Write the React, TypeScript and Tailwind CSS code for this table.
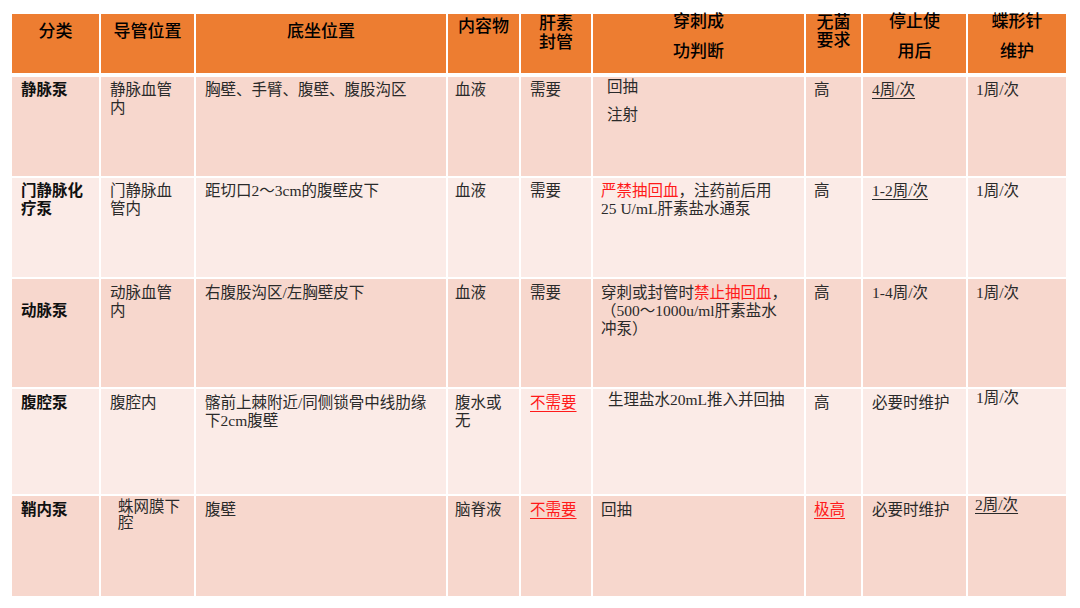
import React from 'react'

const cols = 'grid grid-cols-[87px_93px_250px_71px_70px_211px_55px_103px_98px] gap-x-[2px]'

const Red = ({ children, u }: { children: React.ReactNode; u?: boolean }) => (
  <span className={`text-[#ff1a1a] ${u ? 'underline underline-offset-[3px] decoration-1' : ''}`}>{children}</span>
)

const U = ({ children }: { children: React.ReactNode }) => (
  <span className="underline underline-offset-[3px] decoration-1">{children}</span>
)

interface Row {
  bg: string
  h: string
  cells: React.ReactNode[]
}

const rows: Row[] = [
  {
    bg: 'bg-[#f7d7cd]',
    h: 'h-[99px]',
    cells: [
      <div className="pl-[9px] pt-[4px] font-bold text-[#111]">静脉泵</div>,
      <div className="pl-[9px] pt-[4px]">静脉血管<br />内</div>,
      <div className="pl-[9px] pt-[4px]">胸壁、手臂、腹壁、腹股沟区</div>,
      <div className="pl-[7px] pt-[4px]">血液</div>,
      <div className="pl-[9px] pt-[4px]">需要</div>,
      <div className="pl-[14px] pt-[1px] flex flex-col gap-[10px]">
        <span>回抽</span>
        <span>注射</span>
      </div>,
      <div className="pl-[8px] pt-[4px]">高</div>,
      <div className="pl-[9px] pt-[4px]"><U>4周/次</U></div>,
      <div className="pl-[8px] pt-[4px]">1周/次</div>,
    ],
  },
  {
    bg: 'bg-[#fbebe7]',
    h: 'h-[99px]',
    cells: [
      <div className="pl-[9px] pt-[4px] font-bold text-[#111]">门静脉化<br />疗泵</div>,
      <div className="pl-[9px] pt-[4px]">门静脉血<br />管内</div>,
      <div className="pl-[9px] pt-[4px]">距切口2～3cm的腹壁皮下</div>,
      <div className="pl-[7px] pt-[4px]">血液</div>,
      <div className="pl-[9px] pt-[4px]">需要</div>,
      <div className="pl-[8px] pt-[4px]">
        <Red>严禁抽回血</Red>，注药前后用<br />25 U/mL肝素盐水通泵
      </div>,
      <div className="pl-[8px] pt-[4px]">高</div>,
      <div className="pl-[9px] pt-[4px]"><U>1-2周/次</U></div>,
      <div className="pl-[8px] pt-[4px]">1周/次</div>,
    ],
  },
  {
    bg: 'bg-[#f7d7cd]',
    h: 'h-[108px]',
    cells: [
      <div className="pl-[9px] pt-[23px] font-bold text-[#111]">动脉泵</div>,
      <div className="pl-[9px] pt-[5px]">动脉血管<br />内</div>,
      <div className="pl-[9px] pt-[5px]">右腹股沟区/左胸壁皮下</div>,
      <div className="pl-[7px] pt-[5px]">血液</div>,
      <div className="pl-[9px] pt-[5px]">需要</div>,
      <div className="pl-[8px] pt-[5px]">
        穿刺或封管时<Red>禁止抽回血</Red>，<br />（500～1000u/ml肝素盐水<br />冲泵）
      </div>,
      <div className="pl-[8px] pt-[5px]">高</div>,
      <div className="pl-[9px] pt-[5px]">1-4周/次</div>,
      <div className="pl-[8px] pt-[5px]">1周/次</div>,
    ],
  },
  {
    bg: 'bg-[#fbebe7]',
    h: 'h-[105px]',
    cells: [
      <div className="pl-[9px] pt-[5px] font-bold text-[#111]">腹腔泵</div>,
      <div className="pl-[9px] pt-[5px]">腹腔内</div>,
      <div className="pl-[9px] pt-[5px]">髂前上棘附近/同侧锁骨中线肋缘<br />下2cm腹壁</div>,
      <div className="pl-[7px] pt-[5px]">腹水或<br />无</div>,
      <div className="pl-[9px] pt-[5px]"><Red u>不需要</Red></div>,
      <div className="pl-[15px] pt-[2px]">生理盐水20mL推入并回抽</div>,
      <div className="pl-[8px] pt-[5px]">高</div>,
      <div className="pl-[9px] pt-[5px]">必要时维护</div>,
      <div className="pl-[8px] pt-0">1周/次</div>,
    ],
  },
  {
    bg: 'bg-[#f7d7cd]',
    h: 'h-[100px]',
    cells: [
      <div className="pl-[9px] pt-[5px] font-bold text-[#111]">鞘内泵</div>,
      <div className="pl-[17px] pt-[3px] leading-[16px]">蛛网膜下<br />腔</div>,
      <div className="pl-[9px] pt-[5px]">腹壁</div>,
      <div className="pl-[7px] pt-[5px]">脑脊液</div>,
      <div className="pl-[9px] pt-[5px]"><Red u>不需要</Red></div>,
      <div className="pl-[8px] pt-[5px]">回抽</div>,
      <div className="pl-[8px] pt-[5px]"><Red u>极高</Red></div>,
      <div className="pl-[9px] pt-[5px]">必要时维护</div>,
      <div className="pl-[7px] pt-0"><U>2周/次</U></div>,
    ],
  },
]

export default function App() {
  return (
    <div
      className="w-[1080px] h-[608px] bg-white overflow-hidden pl-[12px] pt-[14px]"
      style={{ fontFamily: '"Liberation Serif", "Noto Sans CJK SC", serif' }}
    >
      <div className="w-[1054px] flex flex-col">
        {/* 表头 */}
        <div className={`${cols} h-[59px] text-[17px] text-black font-medium`}>
          <div className="bg-[#ed7d31] text-center pt-[5px]">分类</div>
          <div className="bg-[#ed7d31] text-center pt-[5px]">导管位置</div>
          <div className="bg-[#ed7d31] text-center pt-[5px]">底坐位置</div>
          <div className="bg-[#ed7d31] text-center pt-0">内容物</div>
          <div className="bg-[#ed7d31] text-center leading-[19px]">肝素<br />封管</div>
          <div className="bg-[#ed7d31] text-center flex flex-col items-center leading-[16px] gap-[14px]">
            <span>穿刺成</span>
            <span>功判断</span>
          </div>
          <div className="bg-[#ed7d31] text-center leading-[18px]">无菌<br />要求</div>
          <div className="bg-[#ed7d31] text-center flex flex-col items-center leading-[16px] gap-[14px]">
            <span>停止使</span>
            <span>用后</span>
          </div>
          <div className="bg-[#ed7d31] text-center flex flex-col items-center leading-[16px] gap-[14px]">
            <span>蝶形针</span>
            <span>维护</span>
          </div>
        </div>

        {/* 内容 */}
        <div className="mt-[4px] flex flex-col gap-[2px] text-[15.5px] leading-[18px] text-[#2a2a2a]">
          {rows.map((row, i) => (
            <div key={i} className={`${cols} ${row.h}`}>
              {row.cells.map((cell, j) => (
                <div key={j} className={`${row.bg} overflow-hidden`}>
                  {cell}
                </div>
              ))}
            </div>
          ))}
        </div>
      </div>
    </div>
  )
}
